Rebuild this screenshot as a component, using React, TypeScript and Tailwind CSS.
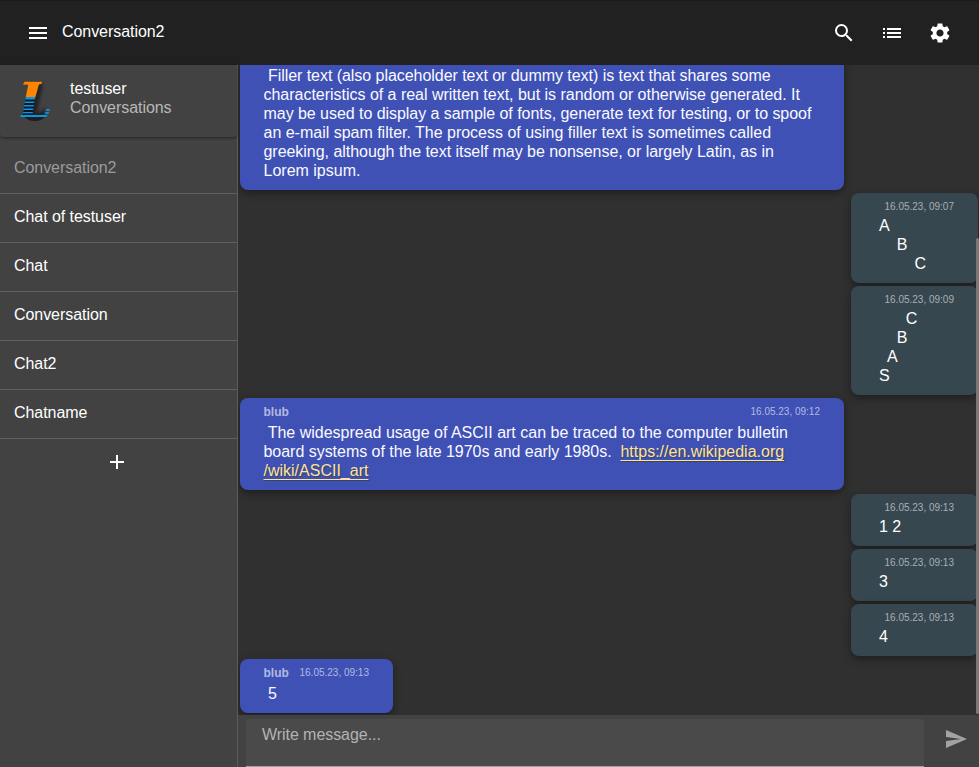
import type { ReactNode } from "react";
import { MdAdd, MdList, MdMenu, MdSearch, MdSend, MdSettings } from "react-icons/md";

const chats = ["Conversation2", "Chat of testuser", "Chat", "Conversation", "Chat2", "Chatname"];

function Logo() {
  return (
    <svg width="40" height="48" viewBox="0 0 40 48" className="shrink-0 overflow-visible">
      <defs>
        <filter id="soft" x="-30%" y="-30%" width="170%" height="170%">
          <feGaussianBlur stdDeviation="1.8" />
        </filter>
      </defs>
      <path
        d="M10 5h14l-1 6-3 14-2 9c4 0 6-2 8-4v8l-6 3H9l5-20z"
        fill="#161616"
        opacity=".7"
        filter="url(#soft)"
      />
      <path d="M5 38.500h21C21 44.500 11 44.500 5 38.500z" fill="#1d1d1f" />
      <path d="M5.500 3.700h17.800l-.8 2-2.600.8L16.300 19.500H6.700L9.200 7 7.400 6.500 4 6.800z" fill="#ff8400" />
      <path d="M6.700 19H16.200L13.800 37H3.700z" fill="#10181f" />
      <path
        d="M6.700 19H16.200l-.4 2.500H6.200zM5.900 23.500h9.600l-.2 1.500H5.500zM5.200 27h9.700l-.2 1.500H4.900zM4.600 30.500h9.800l-.2 1.500H4.200zM4 34h9.900l-.1 1.300H3.700zM2 37h27l-2 2H1z"
        fill="#0894e8"
      />
      <path d="M27.300 31h3.500l-.4 1.800h-3.600zM26.500 34h3.500l-.6 1.800h-3.700z" fill="#0894e8" />
    </svg>
  );
}

function Received({ time, children, short = false }: { time?: string; children: ReactNode; short?: boolean }) {
  return (
    <article
      className={`${short ? "w-[153px]" : "w-[604px]"} ml-[2px] shrink-0 self-start rounded-lg bg-[#3f51b5] pr-6 pb-[10px] pl-[23.500px] shadow-[0_3px_8px_rgba(0,0,0,0.4)]`}
    >
      {time && (
        <header className="flex h-[25px] items-start justify-between pt-[7px] leading-[14px] text-[#b2b9e1]">
          <b className="text-[12px]">blub</b>
          <time className="text-[10px] leading-[13px]">{time}</time>
        </header>
      )}
      <div className={`text-[16px] leading-[19px] whitespace-pre text-[#fafaff] ${time ? "" : "pt-2"}`}>{children}</div>
    </article>
  );
}

function Sent({ time, children }: { time: string; children: ReactNode }) {
  return (
    <article className="w-[127px] shrink-0 self-end rounded-lg bg-[#37474f] pr-6 pb-[10px] pl-7 shadow-[0_3px_8px_rgba(0,0,0,0.4)]">
      <header className="h-[23px] pt-[7px] text-right text-[10px] leading-[13px] text-[#a7afb3]">
        <time className="block">{time}</time>
      </header>
      <div className="text-[16px] leading-[19px] whitespace-pre text-white">{children}</div>
    </article>
  );
}

export default function App() {
  return (
    <div className="flex h-[767px] w-[979px] flex-col overflow-hidden bg-[#303030] font-['Liberation_Sans',Arial,sans-serif] text-[16px] text-white">
      <header className="flex h-[65px] shrink-0 items-center border-t border-[#1a1a1a] bg-[#212121] pr-[27px] pl-[26px]">
        <MdMenu size={24} />
        <h1 className="-mt-[3px] ml-3 flex-1 leading-5 tracking-[-0.06px]">Conversation2</h1>
        <nav className="flex gap-6">
          <MdSearch size={24} />
          <MdList size={24} />
          <MdSettings size={24} />
        </nav>
      </header>
      <div className="flex min-h-0 flex-1">
        <aside className="flex w-[238px] shrink-0 flex-col border-r border-[#5b5b5b] bg-[#424242] tracking-[-0.06px]">
          <div className="flex h-[72px] shrink-0 rounded-b pt-[13px] pl-[19px] shadow-[0_1px_3px_rgba(0,0,0,0.45)]">
            <Logo />
            <div className="ml-[11px] pt-px leading-[19px]">
              <div>testuser</div>
              <div className="text-[#b8b8b8]">Conversations</div>
            </div>
          </div>
          <ul className="pt-2">
            {chats.map((chat, i) => (
              <li
                key={chat}
                className={`flex h-[49px] items-center border-b border-[#606060] pb-[2px] pl-[14px] leading-5 ${i === 0 ? "text-[#9b9b9b]" : "text-white"}`}
              >
                <span>{chat}</span>
              </li>
            ))}
          </ul>
          <div className="flex h-[46px] items-center justify-center pr-[3px]">
            <MdAdd size={24} />
          </div>
        </aside>
        <main className="flex min-w-0 flex-1 flex-col">
          <section className="relative flex h-[650px] shrink-0 flex-col justify-end gap-[3px] overflow-hidden pr-px pb-[2px]">
            <Received>
              <div className="tracking-[-0.045px]">
                {" Filler text (also placeholder text or dummy text) is text that shares some"}
              </div>
              <div className="tracking-[-0.02px]">
                characteristics of a real written text, but is random or otherwise generated. It
              </div>
              <div className="tracking-[-0.045px]">
                may be used to display a sample of fonts, generate text for testing, or to spoof
              </div>
              <div className="tracking-[-0.01px]">
                an e-mail spam filter. The process of using filler text is sometimes called
              </div>
              <div className="tracking-[-0.038px]">
                greeking, although the text itself may be nonsense, or largely Latin, as in
              </div>
              <div>Lorem ipsum.</div>
            </Received>
            <Sent time="16.05.23, 09:07">{"A\n    B\n        C"}</Sent>
            <Sent time="16.05.23, 09:09">{"      C\n    B\n  A\nS"}</Sent>
            <Received time="16.05.23, 09:12">
              {" The widespread usage of ASCII art can be traced to the computer bulletin\n"}
              <span className="tracking-[-0.03px]">{"board systems of the late 1970s and early 1980s.  "}</span>
              <a className="text-[#ffe0a6] underline decoration-1 underline-offset-[3px] [text-shadow:1px_1px_1px_#37474f]">
                {"https://en.wikipedia.org\n/wiki/ASCII_art"}
              </a>
            </Received>
            <div className="mt-px flex flex-col">
              <Sent time="16.05.23, 09:13">1 2</Sent>
            </div>
            <Sent time="16.05.23, 09:13">3</Sent>
            <Sent time="16.05.23, 09:13">4</Sent>
            <Received time="16.05.23, 09:13" short>
              {" 5"}
            </Received>
            <div className="absolute right-0 bottom-px h-[476px] w-[3px] rounded-full bg-[#7c7878]" />
          </section>
          <footer className="flex flex-1 bg-[#424242] pt-[4px] pl-2">
            <div className="w-[678px] rounded-t border-b border-[#a0a0a0] bg-[#4a4a4a] pt-[6px] pl-4 leading-5 tracking-[-0.06px] text-[#b3b3b3]">
              Write message...
            </div>
            <div className="flex flex-1 items-start pt-2 pl-[20px] text-[#a2a2a2]">
              <MdSend size={24} />
            </div>
          </footer>
        </main>
      </div>
    </div>
  );
}
